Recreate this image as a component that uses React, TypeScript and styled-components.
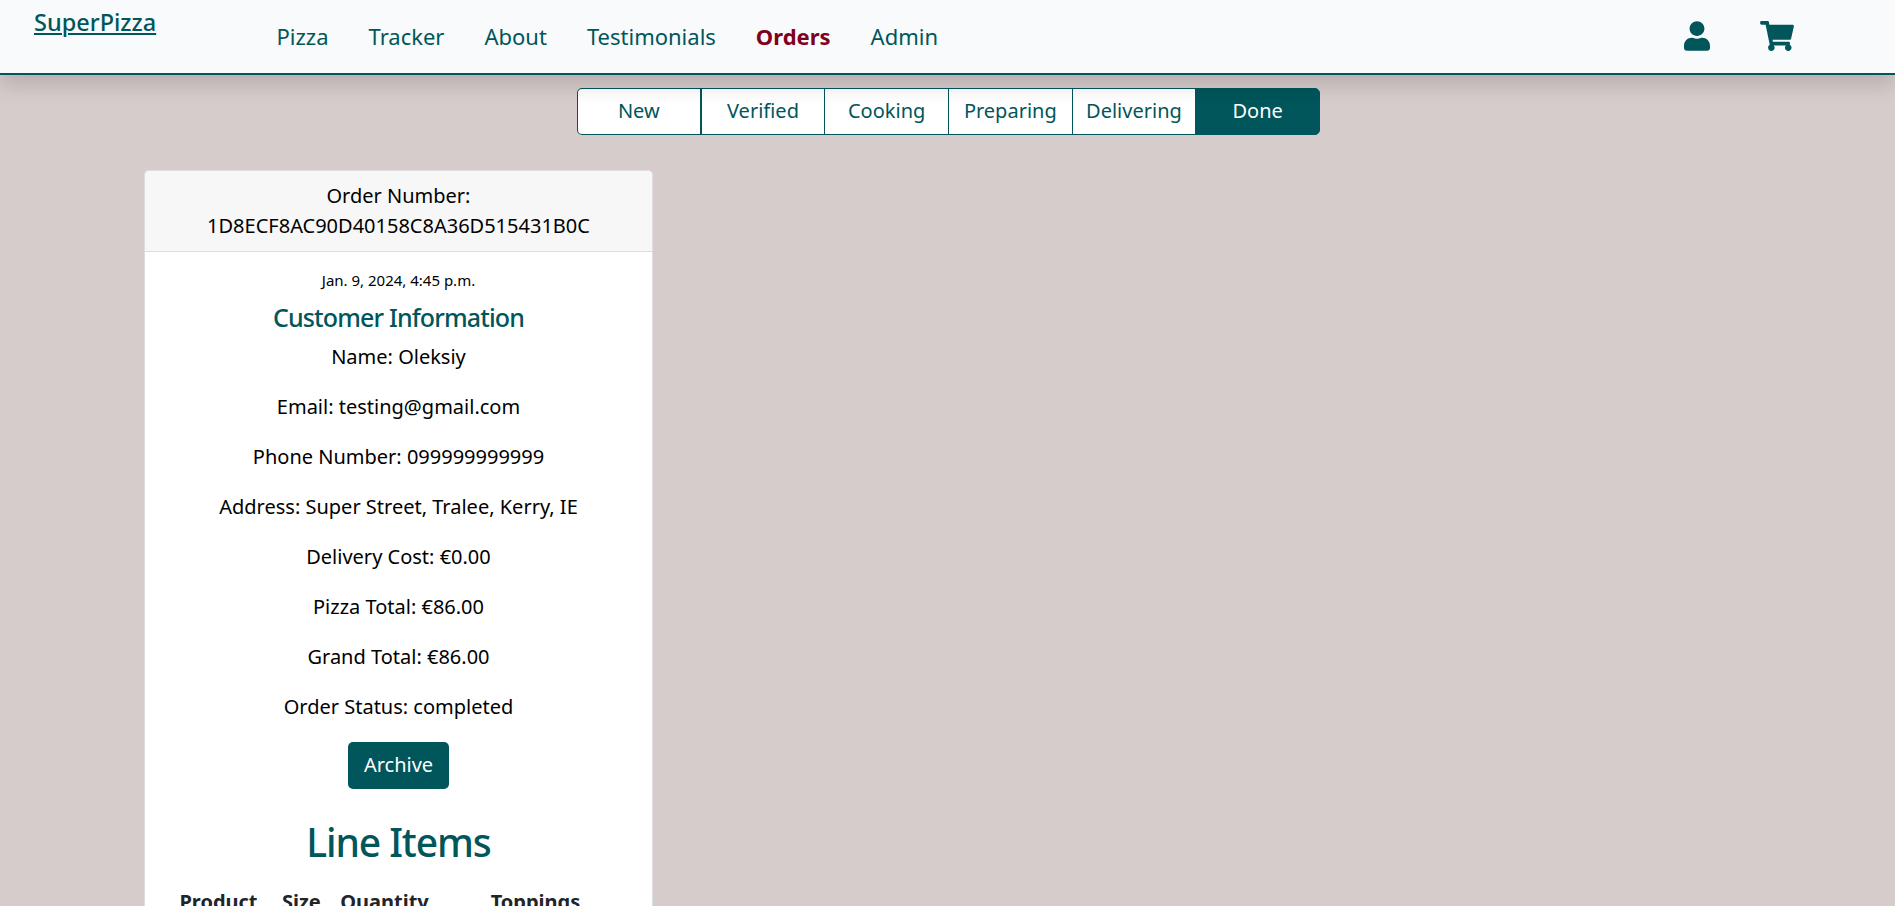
import React from "react";
import styled, { createGlobalStyle, css } from "styled-components";
import { FaUser, FaShoppingCart } from "react-icons/fa";

const teal = "#00565b";

const GlobalStyle = createGlobalStyle`
  *, *::before, *::after { box-sizing: border-box; }
  html { font-size: 20px; }
  body {
    margin: 0;
    height: 906px;
    overflow: hidden;
    background: #d6cccb;
    color: #212529;
    font-family: "Noto Sans", sans-serif;
    line-height: 1.5;
  }
`;

const Header = styled.header`
  position: relative;
  z-index: 2;
  display: flex;
  align-items: center;
  height: 75px;
  padding: 0 101px 0 34px;
  background: #f8fafc;
  border-bottom: 2px solid ${teal};
  box-shadow: 0 10px 20px rgba(0, 0, 0, 0.15);
`;

const Brand = styled.a`
  align-self: flex-start;
  width: 242.5px;
  padding-top: 5px;
  font-size: 23.5px;
  font-weight: 500;
  color: ${teal};
  text-decoration: underline;
  text-decoration-thickness: 2px;
  text-underline-offset: 2px;
`;

const Nav = styled.nav`
  display: flex;
  gap: 40px;
  flex: 1;
`;

const NavLink = styled.a<{ $active?: boolean }>`
  font-size: 22px;
  color: ${({ $active }) => ($active ? "#800020" : teal)};
  font-weight: ${({ $active }) => ($active ? 700 : 400)};
`;

const Tools = styled.div`
  display: flex;
  align-items: center;
  gap: 50px;
  height: 30px;
  margin-bottom: 1px;
  color: ${teal};
`;

const UserIcon = styled(FaUser)`
  width: 26px;
  height: 30px;
`;

const CartIcon = styled(FaShoppingCart)`
  width: 34px;
  height: 30px;
`;

const Main = styled.main`
  display: flex;
  flex-direction: column;
  padding: 13px 144px 0;
`;

const Tabs = styled.div`
  display: flex;
  width: 743px;
  margin: 0 0 35px 433px;
`;

const Tab = styled.button<{ $active?: boolean }>`
  flex: 0 0 124.66px;
  height: 47px;
  padding: 0 0 2px;
  border: 1px solid ${teal};
  background: #fff;
  color: ${teal};
  font: 400 20px/30px "Noto Sans", sans-serif;
  & + & { margin-left: -1px; }
  &:first-child {
    border-right-width: 2px;
    border-radius: 5px 0 0 5px;
  }
  &:last-child { border-radius: 0 5px 5px 0; }
  ${({ $active }) => $active && css`
    background: ${teal};
    color: #fff;
  `}
`;

const Card = styled.article`
  width: 509px;
  border: 1px solid #dedede;
  border-radius: 5px;
  background: #fff;
  text-align: center;
  color: #000;
  overflow: hidden;
`;

const CardHeader = styled.div`
  display: flex;
  flex-direction: column;
  padding: 10px 20px;
  background: #f7f7f7;
  border-bottom: 1px solid #dcdcdc;
`;

const CardBody = styled.div`
  display: flex;
  flex-direction: column;
  align-items: center;
  padding: 13px 20px 20px;
`;

const DateText = styled.small`
  font-size: 15px;
  line-height: 30px;
`;

const Subtitle = styled.h5`
  margin: 7px 0 10px;
  font-size: 25px;
  line-height: 30px;
  font-weight: 500;
  letter-spacing: -0.85px;
  color: ${teal};
`;

const Info = styled.p`
  margin: 0 0 20px;
`;

const ArchiveButton = styled.button`
  width: 101px;
  height: 47px;
  margin-bottom: 29px;
  padding: 0 0 2px;
  border: 0;
  border-radius: 5px;
  background: ${teal};
  color: #fff;
  font: 400 20px/30px "Noto Sans", sans-serif;
`;

const Title = styled.h2`
  margin: 0 0 11px;
  font-size: 39px;
  line-height: 48px;
  font-weight: 500;
  letter-spacing: -1.1px;
  color: ${teal};
`;

const Table = styled.table`
  width: 467px;
  table-layout: fixed;
  border-collapse: collapse;
  color: #212529;
`;

const HeadCell = styled.th<{ $width?: number }>`
  width: ${({ $width }) => ($width ? `${$width}px` : "auto")};
  padding: 10px;
`;

const links = ["Pizza", "Tracker", "About", "Testimonials", "Orders", "Admin"];
const stages = ["New", "Verified", "Cooking", "Preparing", "Delivering", "Done"];
const details = [
  "Name: Oleksiy",
  "Email: testing@gmail.com",
  "Phone Number: 099999999999",
  "Address: Super Street, Tralee, Kerry, IE",
  "Delivery Cost: €0.00",
  "Pizza Total: €86.00",
  "Grand Total: €86.00",
  "Order Status: completed",
];

export default function App() {
  return (
    <>
      <GlobalStyle />
      <Header>
        <Brand>SuperPizza</Brand>
        <Nav>
          {links.map((l) => (
            <NavLink key={l} $active={l === "Orders"}>{l}</NavLink>
          ))}
        </Nav>
        <Tools>
          <UserIcon />
          <CartIcon />
        </Tools>
      </Header>
      <Main>
        <Tabs>
          {stages.map((s) => (
            <Tab key={s} $active={s === "Done"}>{s}</Tab>
          ))}
        </Tabs>
        <Card>
          <CardHeader>
            <span>Order Number:</span>
            <span>1D8ECF8AC90D40158C8A36D515431B0C</span>
          </CardHeader>
          <CardBody>
            <DateText>Jan. 9, 2024, 4:45 p.m.</DateText>
            <Subtitle>Customer Information</Subtitle>
            {details.map((d) => (
              <Info key={d}>{d}</Info>
            ))}
            <ArchiveButton>Archive</ArchiveButton>
            <Title>Line Items</Title>
            <Table>
              <thead>
                <tr>
                  <HeadCell $width={107}>Product</HeadCell>
                  <HeadCell $width={58}>Size</HeadCell>
                  <HeadCell $width={109}>Quantity</HeadCell>
                  <HeadCell>Toppings</HeadCell>
                </tr>
              </thead>
            </Table>
          </CardBody>
        </Card>
      </Main>
    </>
  );
}
